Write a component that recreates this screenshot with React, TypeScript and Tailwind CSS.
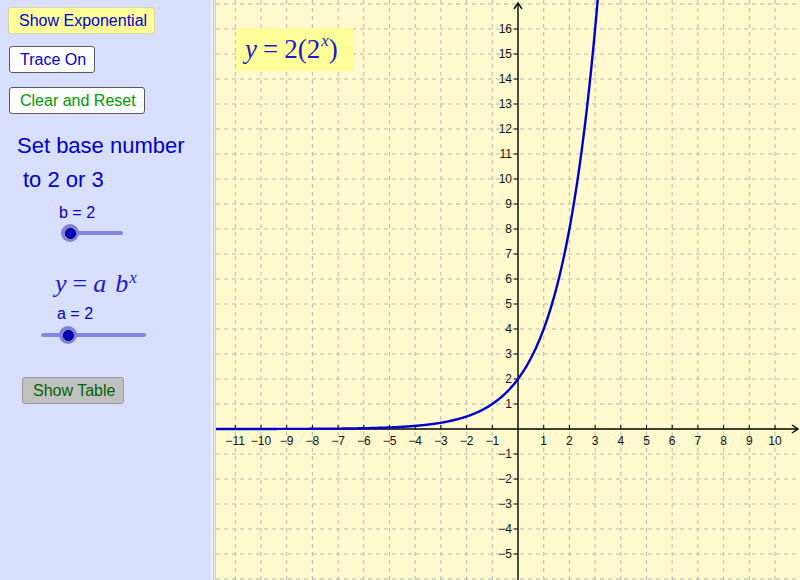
import React from "react"

const X0 = 518
const Y0 = 429
const UX = 25.7
const UY = 25

const px = (x: number) => X0 + x * UX
const py = (y: number) => Y0 - y * UY

function Slider({ width, knob, left }: { width: number; knob: number; left: number }) {
    return (
        <div className="relative h-[18px]" style={{ marginLeft: left, width }}>
            <div className="absolute left-0 right-0 top-[7px] h-[4px] rounded-full bg-[#8585e4]" />
            <div
                className="absolute top-0 w-[18px] h-[18px] rounded-full bg-[#8080e0] flex items-center justify-center"
                style={{ left: knob - 9 }}
            >
                <div className="w-[11px] h-[11px] rounded-full bg-[#0000cc] border border-black" />
            </div>
        </div>
    )
}

function Graph() {
    const vlines: number[] = []
    for (let k = -11; k <= 10; k++) if (k !== 0) vlines.push(k)
    const hlines: number[] = []
    for (let j = -6; j <= 17; j++) if (j !== 0) hlines.push(j)

    const pts: string[] = []
    for (let x = -12; x <= 3.12; x += 0.04) {
        const y = 2 * Math.pow(2, x)
        pts.push(`${px(x).toFixed(2)},${py(y).toFixed(2)}`)
    }

    const xLabels = vlines.filter((k) => k >= -11 && k <= 10)
    const yLabels = hlines.filter((j) => j >= -5 && j <= 16)

    return (
        <svg className="absolute inset-0" width={584} height={580} viewBox="216 0 584 580">
            {/* grid */}
            <g stroke="#b9b9b9" strokeWidth={1} strokeDasharray="4 4">
                {vlines.map((k) => (
                    <line key={"v" + k} x1={px(k)} y1={0} x2={px(k)} y2={580} />
                ))}
                {hlines.map((j) => (
                    <line key={"h" + j} x1={216} y1={py(j)} x2={800} y2={py(j)} />
                ))}
            </g>

            {/* axes */}
            <g stroke="#000" strokeWidth={1.4} fill="none">
                <line x1={216} y1={Y0} x2={798} y2={Y0} />
                <line x1={X0} y1={3} x2={X0} y2={580} />
                <polyline points="514,9 518,3 522,9" />
                <polyline points="792,425 798,429 792,433" />
            </g>
            <g stroke="#000" strokeWidth={1}>
                {xLabels.map((k) => (
                    <line key={"tx" + k} x1={px(k)} y1={Y0 - 4} x2={px(k)} y2={Y0} />
                ))}
                {yLabels.map((j) => (
                    <line key={"ty" + j} x1={X0 - 4} y1={py(j)} x2={X0} y2={py(j)} />
                ))}
            </g>

            {/* labels */}
            <g fontFamily="'Liberation Sans', Arial, sans-serif" fontSize={12} fill="#111">
                {xLabels.map((k) => (
                    <text key={"lx" + k} x={px(k)} y={445} textAnchor="middle">
                        {k < 0 ? "\u2212" + -k : String(k)}
                    </text>
                ))}
                {yLabels.map((j) => (
                    <text key={"ly" + j} x={512} y={py(j) + 4} textAnchor="end">
                        {j < 0 ? "\u2212" + -j : String(j)}
                    </text>
                ))}
            </g>

            {/* curve */}
            <polyline points={pts.join(" ")} fill="none" stroke="#0000cc" strokeWidth={2.4} strokeLinejoin="round" />
        </svg>
    )
}

export default function App() {
    const btn =
        "h-[27px] pl-[10px] rounded-[3px] border text-[16px] leading-none flex items-center whitespace-nowrap"
    const serif = { fontFamily: "'Liberation Serif', 'Times New Roman', serif" }
    return (
        <div
            className="w-[800px] h-[580px] flex overflow-hidden bg-white"
            style={{ fontFamily: "'Liberation Sans', Arial, sans-serif" }}
        >
            {/* left panel */}
            <div className="w-[211px] h-full bg-[#d8dfff] flex flex-col items-start pt-[7px]">
                <button className={`${btn} ml-[8px] w-[147px] bg-[#ffff99] border-[#d6d6a8] text-[#0000cc]`}>
                    Show Exponential
                </button>
                <button className={`${btn} ml-[9px] mt-[12px] w-[86px] bg-white border-[#5a5a5a] text-[#0000cc]`}>
                    Trace On
                </button>
                <button className={`${btn} ml-[9px] mt-[14px] w-[136px] bg-white border-[#5a5a5a] text-[#009900]`}>
                    Clear and Reset
                </button>
                <div className="ml-[17px] mt-[19px] h-[26px] leading-[26px] text-[22px] text-[#0000cc] whitespace-nowrap">
                    Set base number
                </div>
                <div className="ml-[23px] mt-[8px] h-[26px] leading-[26px] text-[22px] text-[#0000cc] whitespace-nowrap">
                    to 2 or 3
                </div>
                <div className="ml-[59px] mt-[11px] h-[18px] leading-[18px] text-[16px] text-[#0000cc]">b = 2</div>
                <div className="mt-[2px]">
                    <Slider left={63} width={60} knob={7} />
                </div>
                <div
                    className="ml-[55px] mt-[27px] h-[30px] leading-[30px] text-[26px] text-[#1a1acc] whitespace-nowrap"
                    style={serif}
                >
                    <i>y</i>
                    <span className="mx-[6px]">=</span>
                    <i>a</i>
                    <i className="ml-[9px]">b</i>
                    <i className="inline-block text-[17px] relative -top-[9px] ml-[1px]">x</i>
                </div>
                <div className="ml-[57px] mt-[6px] h-[18px] leading-[18px] text-[16px] text-[#0000cc]">a = 2</div>
                <div className="mt-[3px]">
                    <Slider left={41} width={105} knob={27} />
                </div>
                <button
                    className={`${btn} ml-[22px] mt-[33px] w-[102px] bg-[#c0c0c0] border-[#9a9a9a] text-[#006400]`}
                >
                    Show Table
                </button>
            </div>

            {/* divider */}
            <div className="w-[2px] h-full bg-[#f2f2f2]" />
            <div className="w-[1px] h-full bg-[#c4c4c4]" />
            <div className="w-[1px] h-full bg-[#ececec]" />

            {/* graphics view */}
            <div className="relative flex-1 h-full bg-[#fffacd] border-l border-[#d4d4d4]">
                <Graph />
                <div
                    className="absolute left-[20px] top-[28px] w-[117px] h-[43px] bg-[#ffff99] flex items-center pl-[9px] text-[27px] text-[#1a1acc] whitespace-nowrap"
                    style={serif}
                >
                    <i>y</i>
                    <span className="mx-[6px]">=</span>2(2
                    <i className="inline-block text-[17px] relative -top-[9px] ml-[1px]">x</i>)
                </div>
            </div>
        </div>
    )
}
